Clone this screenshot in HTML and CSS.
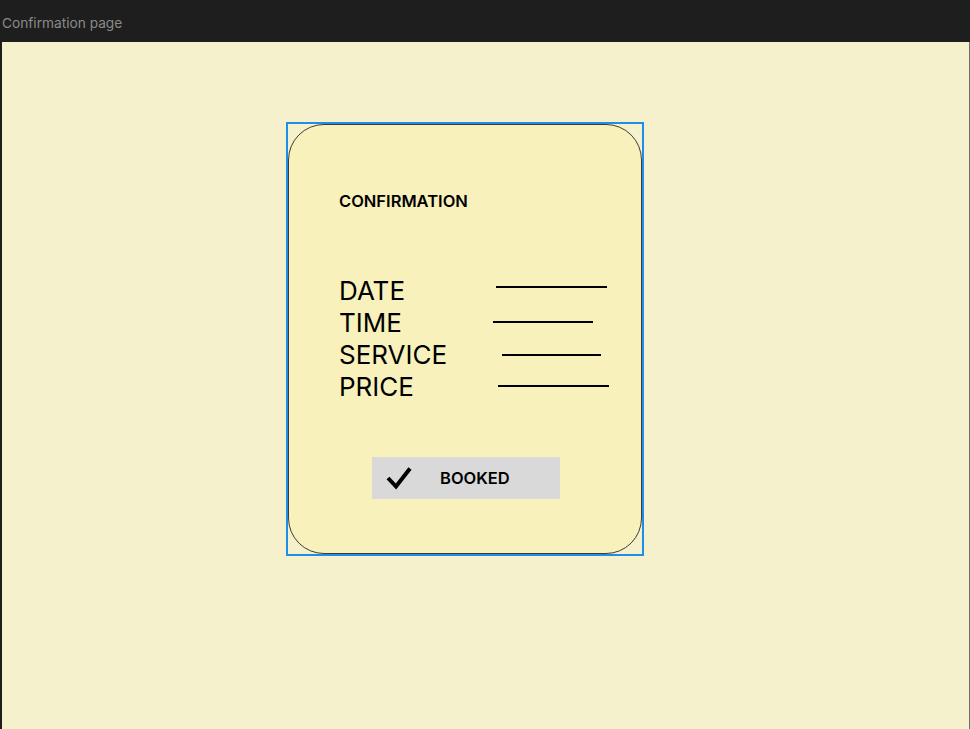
FILE: index.html
```html
<!DOCTYPE html>
<html>
<head>
<meta charset="utf-8">
<link rel="stylesheet" href="styles.css">
</head>
<body>
<div class="topbar"><span class="page-name">Confirmation page</span></div>
<div class="canvas">
  <div class="frame">
    <div class="card">
      <h1 class="title">CONFIRMATION</h1>
      <div class="rows">
        <div class="row"><span class="label">DATE</span><span class="line line-date"></span></div>
        <div class="row"><span class="label">TIME</span><span class="line line-time"></span></div>
        <div class="row"><span class="label">SERVICE</span><span class="line line-service"></span></div>
        <div class="row"><span class="label">PRICE</span><span class="line line-price"></span></div>
      </div>
      <div class="booked">
        <svg class="check" width="26" height="24" viewBox="0 0 26 24"><path d="M2 12 L10 20.5 L24 2.5" fill="none" stroke="#000" stroke-width="4"/></svg>
        <span class="booked-text">BOOKED</span>
      </div>
    </div>
  </div>
</div>
</body>
</html>
```

FILE: styles.css
```css
* { box-sizing: border-box; }
html, body { margin: 0; padding: 0; }
body {
  background: #1e1e1e;
  width: 970px;
  height: 729px;
  overflow: hidden;
  font-family: Inter, "Liberation Sans", sans-serif;
}
.topbar {
  height: 42px;
  display: flex;
  align-items: center;
  padding-left: 2px;
  padding-top: 4px;
}
.page-name {
  color: #8a8a8a;
  font-size: 13.7px;
}
.canvas {
  margin-left: 2px;
  width: 968px;
  height: 687px;
  background: #f5f1cd;
  border-right: 1px solid #6e6e6e;
  padding-top: 80px;
  padding-left: 284px;
}
.frame {
  width: 358px;
  height: 434px;
  border: 2px solid #1e8fe8;
}
.card {
  height: 100%;
  background: #f8f1bb;
  border: 1px solid #3a3a3a;
  border-radius: 36px;
  padding: 66px 0 0 50px;
}
.title {
  margin: 0;
  font-size: 16.5px;
  font-weight: 600;
  line-height: 20px;
  color: #000;
}
.rows {
  margin-top: 64px;
  display: flex;
  flex-direction: column;
}
.row {
  height: 32px;
  position: relative;
}
.label {
  font-size: 26px;
  line-height: 32px;
  color: #000;
}
.line {
  position: absolute;
  height: 2px;
  background: #000;
}
.line-date { left: 157px; width: 111px; top: 11px; }
.line-time { left: 154px; width: 100px; top: 14px; }
.line-service { left: 163px; width: 99px; top: 15px; }
.line-price { left: 159px; width: 111px; top: 14px; }
.booked {
  margin-top: 54px;
  margin-left: 33px;
  width: 188px;
  height: 42px;
  background: #d9d9d9;
  display: flex;
  align-items: center;
  padding-left: 14px;
}
.check { display: block; }
.booked-text {
  margin-left: 28px;
  font-size: 16.5px;
  font-weight: 600;
  color: #000;
}
```
